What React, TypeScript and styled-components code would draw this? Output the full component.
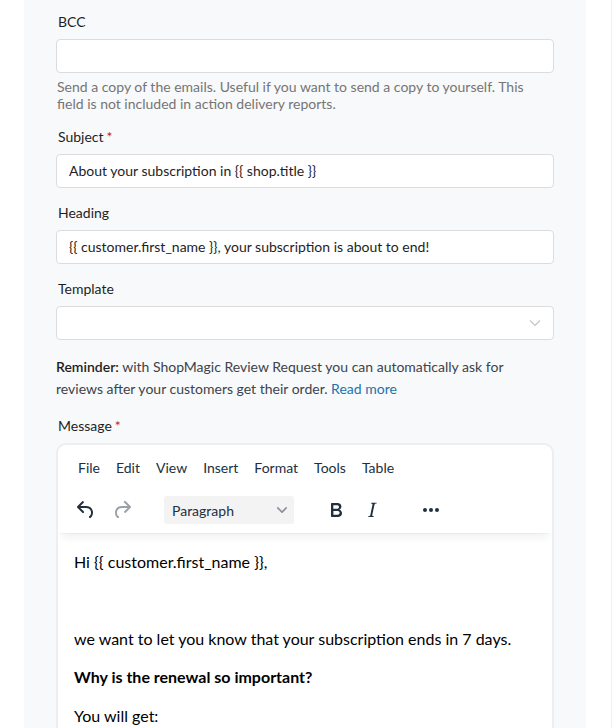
import React from 'react';
import styled, { createGlobalStyle } from 'styled-components';

const GlobalStyle = createGlobalStyle`
  html, body {
    margin: 0;
    padding: 0;
    background: #ffffff;
  }
  body {
    font-family: 'Lato', 'Liberation Sans', sans-serif;
    font-size: 14px;
    color: #1e1e1e;
  }
`;

const Page = styled.div`
  min-height: 728px;
  padding-left: 24px;
  border-right: 1px solid #f0f0f1;
  box-sizing: border-box;
  width: 612px;
  overflow: hidden;
`;

const Panel = styled.div`
  width: 562px;
  min-height: 728px;
  box-sizing: border-box;
  background: #f8f9fa;
  padding: 12px 32px 0;
  display: flex;
  flex-direction: column;
`;

const Field = styled.div`
  display: flex;
  flex-direction: column;
  margin-bottom: 15px;
`;

const Label = styled.label`
  display: block;
  padding-left: 2px;
  line-height: 20px;
  margin-bottom: 7px;
  color: #1e1e1e;
`;

const Required = styled.span`
  color: #cc1818;
  margin-left: 3px;
`;

const Input = styled.div`
  height: 34px;
  box-sizing: border-box;
  border: 1px solid #dcdcde;
  border-radius: 4px;
  background: #ffffff;
  padding: 0 12px;
  display: flex;
  align-items: center;
  justify-content: space-between;
  color: #1e1e1e;
  line-height: 20px;
`;

const Help = styled.p`
  margin: 5px 0 0;
  padding-left: 1px;
  max-width: 480px;
  color: #757575;
  line-height: 17px;
`;

const Reminder = styled.p`
  margin: 1px 0 16px;
  max-width: 480px;
  color: #3c434a;
  line-height: 22px;
`;

const Strong = styled.strong`
  color: #1e1e1e;
  font-weight: 600;
`;

const Link = styled.a`
  color: #2271b1;
  text-decoration: none;
`;

const Editor = styled.div`
  border: 2px solid #eeeeee;
  border-radius: 10px;
  background: #ffffff;
  overflow: hidden;
`;

const Header = styled.div`
  box-shadow: 0 2px 2px -2px rgba(34, 47, 62, 0.1), 0 8px 8px -4px rgba(34, 47, 62, 0.07);
  position: relative;
  z-index: 1;
`;

const Menubar = styled.div`
  display: flex;
  height: 44px;
  box-sizing: border-box;
  align-items: center;
  padding: 2px 0 0 12px;
`;

const MenuButton = styled.span`
  padding: 0 8px;
  color: #222f3e;
  font-size: 14px;
  line-height: 34px;
`;

const Toolbar = styled.div`
  display: flex;
  align-items: center;
  column-gap: 25px;
  padding: 7px 0 9px 11px;
`;

const Group = styled.div`
  display: flex;
  gap: 2px;
`;

const ToolButton = styled.span<{ $disabled?: boolean }>`
  width: 34px;
  height: 28px;
  display: flex;
  align-items: center;
  justify-content: center;
  color: ${(p) => (p.$disabled ? 'rgba(34, 47, 62, 0.45)' : '#222f3e')};
  svg {
    fill: currentColor;
  }
`;

const BlockSelect = styled.span`
  width: 130px;
  height: 28px;
  box-sizing: border-box;
  display: flex;
  align-items: center;
  justify-content: space-between;
  padding: 0 7px 0 8px;
  background: #f3f3f4;
  border-radius: 3px;
  color: #222f3e;
  font-size: 14px;
  svg {
    fill: rgba(34, 47, 62, 0.5);
  }
`;

const Content = styled.div`
  padding: 18px 16px 16px;
  color: #000000;
  font-size: 16px;
  line-height: 1.4;
  p {
    margin: 0 0 16px;
  }
`;

const Icon = ({ d, size = 24, box = 24 }: { d: string; size?: number; box?: number }) => (
  <svg width={size} height={size} viewBox={`0 0 ${box} ${box}`}>
    <path d={d} fillRule="evenodd" />
  </svg>
);

const icons = {
  undo: 'M6.4 8H12c3.7 0 6.2 2 6.8 5.1.6 2.7-.4 5.6-2.3 6.8a1 1 0 0 1-1-1.8c1.1-.6 1.8-2.7 1.4-4.6-.5-2.1-2.1-3.5-4.9-3.5H6.4l3.3 3.3a1 1 0 1 1-1.4 1.4l-5-5a1 1 0 0 1 0-1.4l5-5a1 1 0 0 1 1.4 1.4L6.4 8Z',
  redo: 'M17.6 10H12c-2.8 0-4.4 1.4-4.9 3.5-.4 2 .3 4 1.4 4.6a1 1 0 1 1-1 1.8c-2-1.2-2.9-4.1-2.3-6.8.6-3 3-5.1 6.8-5.1h5.6l-3.3-3.3a1 1 0 1 1 1.4-1.4l5 5a1 1 0 0 1 0 1.4l-5 5a1 1 0 0 1-1.4-1.4l3.3-3.3Z',
  bold: 'M7.8 19c-.3 0-.5 0-.6-.2l-.2-.5V5.7c0-.2 0-.4.2-.5l.6-.2h5c1.5 0 2.7.3 3.5 1 .7.6 1.1 1.4 1.1 2.5a3 3 0 0 1-.6 1.9c-.4.6-1 1-1.6 1.2.4.1.9.3 1.3.6s.8.7 1 1.2c.4.4.5 1 .5 1.6 0 1.3-.4 2.3-1.3 3-.8.7-2.1 1-3.8 1H7.8Zm5-8.3c.6 0 1.2-.1 1.6-.5.4-.3.6-.7.6-1.3 0-1.1-.8-1.7-2.3-1.7H9.3v3.5h3.4Zm.5 6c.7 0 1.3-.1 1.7-.4.4-.4.6-.9.6-1.5s-.2-1-.7-1.4c-.4-.3-1-.4-2-.4H9.4v3.8h4Z',
  italic: 'm16.7 4.7-.1.9h-.3c-.6 0-1 0-1.4.3-.3.3-.4.6-.5 1.1l-2.1 9.8v.6c0 .5.4.8 1.4.8h.2l-.2.8H8l.2-.8h.2c1.1 0 1.8-.5 2-1.5l2-9.8.1-.5c0-.6-.4-.8-1.4-.8h-.3l.2-.9h5.8Z',
  more: 'M6 10a2 2 0 0 0-2 2c0 1.1.9 2 2 2a2 2 0 0 0 2-2 2 2 0 0 0-2-2Zm12 0a2 2 0 0 0-2 2c0 1.1.9 2 2 2a2 2 0 0 0 2-2 2 2 0 0 0-2-2Zm-6 0a2 2 0 0 0-2 2c0 1.1.9 2 2 2a2 2 0 0 0 2-2 2 2 0 0 0-2-2Z',
  chevron: 'M8.7 2.2c.3-.3.8-.3 1 0 .4.4.4.9 0 1.2L5.7 7.8c-.3.3-.9.3-1.2 0L.2 3.4a.8.8 0 0 1 0-1.2c.3-.3.8-.3 1.1 0L5 6l3.7-3.8Z',
};

const SelectChevron = () => (
  <svg width="12" height="8" viewBox="0 0 12 8">
    <polyline points="1,1.5 6,6.5 11,1.5" fill="none" stroke="#c3c4c7" strokeWidth="1.2" />
  </svg>
);

const menus = ['File', 'Edit', 'View', 'Insert', 'Format', 'Tools', 'Table'];

export default function App() {
  return (
    <>
      <GlobalStyle />
      <Page>
        <Panel>
          <Field>
            <Label>BCC</Label>
            <Input />
            <Help>
              Send a copy of the emails. Useful if you want to send a copy to yourself. This
              field is not included in action delivery reports.
            </Help>
          </Field>
          <Field>
            <Label>
              Subject<Required>*</Required>
            </Label>
            <Input>About your subscription in {'{{ shop.title }}'}</Input>
          </Field>
          <Field>
            <Label>Heading</Label>
            <Input>{'{{ customer.first_name }}'}, your subscription is about to end!</Input>
          </Field>
          <Field>
            <Label>Template</Label>
            <Input>
              <span />
              <SelectChevron />
            </Input>
          </Field>
          <Reminder>
            <Strong>Reminder:</Strong> with ShopMagic Review Request you can automatically ask for
            reviews after your customers get their order. <Link href="#">Read more</Link>
          </Reminder>
          <Field>
            <Label>
              Message<Required>*</Required>
            </Label>
            <Editor>
              <Header>
                <Menubar>
                  {menus.map((m) => (
                    <MenuButton key={m}>{m}</MenuButton>
                  ))}
                </Menubar>
                <Toolbar>
                  <Group>
                    <ToolButton>
                      <Icon d={icons.undo} />
                    </ToolButton>
                    <ToolButton $disabled>
                      <Icon d={icons.redo} />
                    </ToolButton>
                  </Group>
                  <Group>
                    <BlockSelect>
                      Paragraph
                      <Icon d={icons.chevron} size={10} box={10} />
                    </BlockSelect>
                  </Group>
                  <Group>
                    <ToolButton>
                      <Icon d={icons.bold} />
                    </ToolButton>
                    <ToolButton>
                      <Icon d={icons.italic} />
                    </ToolButton>
                  </Group>
                  <Group>
                    <ToolButton>
                      <Icon d={icons.more} />
                    </ToolButton>
                  </Group>
                </Toolbar>
              </Header>
              <Content>
                <p>Hi {'{{ customer.first_name }}'},</p>
                <p>&nbsp;</p>
                <p>we want to let you know that your subscription ends in 7 days.</p>
                <p>
                  <strong>Why is the renewal so important?</strong>
                </p>
                <p>You will get:</p>
                <p>&nbsp;</p>
              </Content>
            </Editor>
          </Field>
        </Panel>
      </Page>
    </>
  );
}
